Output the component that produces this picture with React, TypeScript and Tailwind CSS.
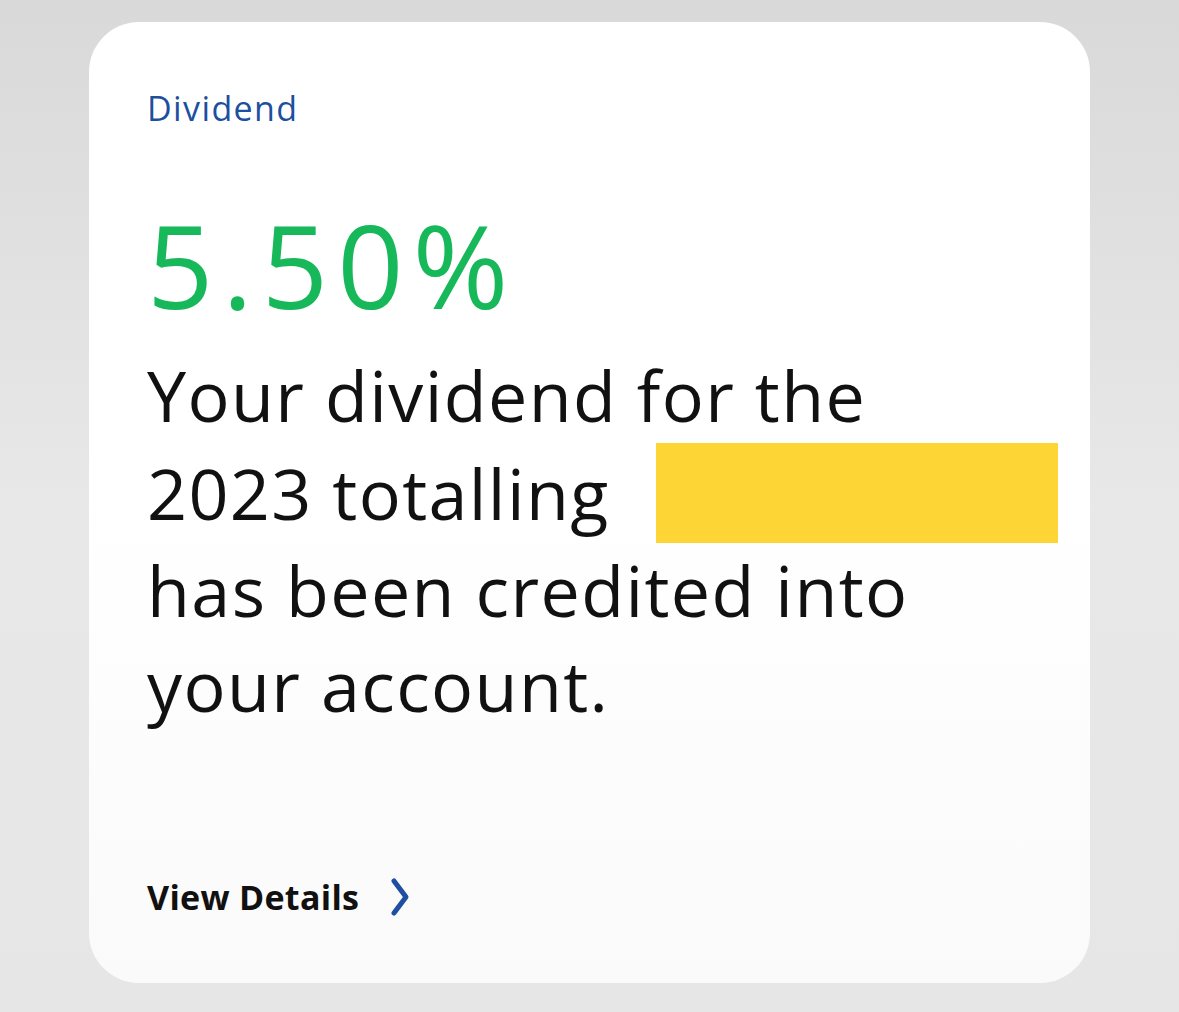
import React from "react";

export default function App() {
  return (
    <div
      className="w-[1179px] h-[1012px] bg-[#e6e6e6] bg-gradient-to-b from-[#d9d9d9] via-[#e8e8e8] to-[#e6e6e6] pt-[22px] pl-[89px]"
      style={{ fontFamily: "'Open Sans', 'Noto Sans', sans-serif" }}
    >
      <div className="w-[1001px] h-[961px] rounded-[50px] bg-gradient-to-b from-white via-white to-[#fafafa] flex flex-col pl-[58px] pt-[64px] pb-[66px]">
        <div className="text-[34px] leading-[44px] text-[#1d4f9f] font-normal tracking-[1.4px]">Dividend</div>
        <div className="mt-[74px] text-[116px] leading-[120px] text-[#16b85a] font-normal tracking-[9px]">5.50%</div>
        <div className="mt-[24px] text-[70px] leading-[95px] text-[#111111] font-medium tracking-[1.4px]">
          <div>Your dividend for the</div>
          <div className="flex items-center">
            <span>2023 totalling</span>
            <span className="ml-auto mr-[32px] inline-block w-[402px] h-[100px] bg-[#fdd535]"></span>
          </div>
          <div>has been credited into</div>
          <div>your account.</div>
        </div>
        <div className="mt-auto flex items-center gap-[30px]">
          <span className="text-[34px] leading-[40px] font-bold text-[#111111] tracking-[0.3px]">View Details</span>
          <svg width="22" height="40" viewBox="0 0 22 40" fill="none">
            <path d="M5 4 L17 20 L5 36" stroke="#1f4fa0" strokeWidth="5" strokeLinecap="round" strokeLinejoin="round" />
          </svg>
        </div>
      </div>
    </div>
  );
}
